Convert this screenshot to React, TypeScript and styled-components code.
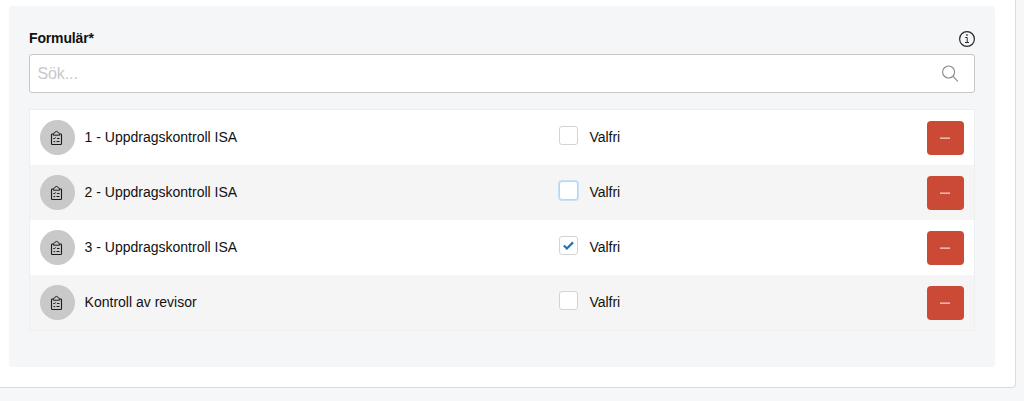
import React, { useState } from 'react';
import styled, { createGlobalStyle, css } from 'styled-components';

const GlobalStyle = createGlobalStyle`
  *, *::before, *::after { box-sizing: border-box; }
  body {
    margin: 0;
    background: #f5f7f9;
    color: #111;
    font: 14px/20px "Liberation Sans", Arial, sans-serif;
    overflow: hidden;
  }
`;

const Page = styled.main`
  height: 401px;
  padding-right: 8px;
`;

const Card = styled.section`
  height: 388px;
  padding: 6px 20px 20px 9px;
  background: #fff;
  border: solid #d9dbdd;
  border-width: 0 1px 1px 0;
  border-radius: 0 0 4px 0;
`;

const Panel = styled.div`
  height: 361px;
  padding: 22px 20px 0;
  background: #f5f6f8;
  border-radius: 4px;
`;

const Heading = styled.div`
  display: flex;
  justify-content: space-between;
  height: 26px;
`;

const Label = styled.label`
  font-weight: 700;
  letter-spacing: -0.15px;
`;

const InfoIcon = styled.svg`
  width: 18px;
  height: 18px;
  margin-top: 2px;
  margin-right: -1px;
`;

const SearchField = styled.div`
  display: flex;
  align-items: center;
  height: 39px;
  padding: 0 15px 0 7.5px;
  background: #fff;
  border: 1px solid #c6c6c6;
  border-radius: 3px;
`;

const SearchInput = styled.input`
  flex: 1;
  min-width: 0;
  padding: 0;
  border: 0;
  outline: 0;
  background: none;
  font: 16px/20px "Liberation Sans", Arial, sans-serif;
  letter-spacing: -0.1px;
  &::placeholder { color: #c9c9c9; opacity: 1; }
`;

const SearchIcon = styled.svg`
  width: 17px;
  height: 17px;
`;

const List = styled.ul`
  margin: 16px 0 0;
  padding: 0;
  list-style: none;
  border: 1px solid #eeeff0;
`;

const Row = styled.li`
  display: grid;
  grid-template-columns: 44.6px 474.4px 1fr 37px;
  align-items: center;
  height: 55px;
  padding: 0 10px;
  background: #fff;
  &:nth-child(even) { background: #f5f5f5; }
`;

const Avatar = styled.span`
  display: flex;
  align-items: center;
  justify-content: center;
  width: 35px;
  height: 35px;
  border-radius: 50%;
  background: #c9c9c9;
`;

const Clipboard = styled.svg`
  width: 13px;
  height: 17px;
  margin-right: 2px;
`;

const RowText = styled.span`
  padding-bottom: 2px;
`;

const Option = styled.label`
  display: flex;
  align-items: center;
  gap: 11.4px;
`;

const Checkbox = styled.button<{ $focused?: boolean }>`
  display: flex;
  align-items: center;
  justify-content: center;
  width: 19px;
  height: 19px;
  margin-bottom: 4px;
  padding: 0;
  background: #fff;
  border: 1px solid #d4d4d5;
  border-radius: 3px;
  outline: 0;
  ${({ $focused }) => $focused && css`
    border-color: #b4d8f3;
    box-shadow: 0 0 0 1px #c5e1f6;
  `}
`;

const RemoveButton = styled.button`
  display: flex;
  align-items: center;
  justify-content: center;
  width: 37px;
  height: 34px;
  margin-top: 1px;
  padding: 0;
  border: 0;
  border-radius: 4px;
  background: #cb4a35;
`;

const MinusBar = styled.span`
  width: 10px;
  height: 2px;
  margin-right: 1px;
  border-top: 1px solid #de8e80;
  background: #e9b3a9;
`;

const ClipboardIcon = () => (
  <Clipboard viewBox="0 0 13 17" fill="none" stroke="#1c1c1c">
    <path d="M3.2 5H2.3q-.8 0-.8.8v8.9q0 .8.8.8h8.4q.8 0 .8-.8V5.8q0-.8-.8-.8H9.8" strokeWidth="1.1" />
    <path d="M3.4 6.2V4.8q0-.6.7-.8l.8-.2Q5.1 2.4 6.5 2.4t1.6 1.4l.8.2q.7.2.7.8v1.4z" />
    <path d="m3.3 9.1.9.9 1.5-1.6M7 9.5h2.5M3.5 12.6h1.7M6.5 12.5h3" />
  </Clipboard>
);

const forms = [
  { name: '1 - Uppdragskontroll ISA' },
  { name: '2 - Uppdragskontroll ISA', focused: true },
  { name: '3 - Uppdragskontroll ISA', optional: true },
  { name: 'Kontroll av revisor' },
];

export default function App() {
  const [checked, setChecked] = useState(forms.map((f) => !!f.optional));
  const toggle = (index: number) =>
    setChecked((values) => values.map((v, i) => (i === index ? !v : v)));

  return (
    <>
      <GlobalStyle />
      <Page>
        <Card>
          <Panel>
            <Heading>
              <Label htmlFor="search">Formulär*</Label>
              <InfoIcon viewBox="0 0 18 18" fill="none" stroke="#26282a">
                <circle cx="9" cy="9" r="7.4" strokeWidth="1.2" />
                <path d="M7.2 7.5h2v5M7 12.5h4" />
                <path d="M8.2 5h1.5" strokeWidth="1.3" />
              </InfoIcon>
            </Heading>
            <SearchField>
              <SearchInput id="search" placeholder="Sök..." />
              <SearchIcon viewBox="0 0 17 17" fill="none" stroke="#898989" strokeWidth="1.1">
                <circle cx="6.6" cy="7" r="6" />
                <path d="m11 11.4 4.9 4.9" />
              </SearchIcon>
            </SearchField>
            <List>
              {forms.map((form, i) => (
                <Row key={form.name}>
                  <Avatar><ClipboardIcon /></Avatar>
                  <RowText>{form.name}</RowText>
                  <Option>
                    <Checkbox
                      type="button"
                      role="checkbox"
                      aria-checked={checked[i]}
                      $focused={form.focused}
                      onClick={() => toggle(i)}
                    >
                      {checked[i] && (
                        <svg width="11" height="9" viewBox="0 0 11 9" fill="none" stroke="#1f74b8" strokeWidth="2.2">
                          <path d="m.9 4.5 3 3L10 1.4" />
                        </svg>
                      )}
                    </Checkbox>
                    <RowText>Valfri</RowText>
                  </Option>
                  <RemoveButton type="button" aria-label="Ta bort"><MinusBar /></RemoveButton>
                </Row>
              ))}
            </List>
          </Panel>
        </Card>
      </Page>
    </>
  );
}
